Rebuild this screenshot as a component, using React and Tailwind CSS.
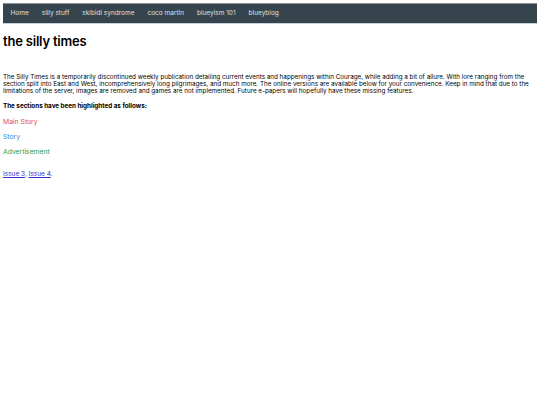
const links = ["Home", "silly stuff", "skibidi syndrome", "coco martin", "blueyism 101", "blueyblog"];

export default function App() {
    return (
        <div className="min-h-screen bg-white p-[3px] text-black" style={{ fontFamily: "Inter, 'Noto Sans', sans-serif" }}>
            <nav className="flex h-[21px] items-center border-t border-b border-t-[#8a9096] border-b-[#c9d0d4] bg-[#36444d] pl-[1px]">
                {links.map((l) => (
                    <a key={l} href="#" className="px-[6.5px] text-[6.5px] text-[#dde2e6]">
                        {l}
                    </a>
                ))}
            </nav>
            <h1 className="mt-[8px] text-[13px] font-semibold leading-[18px] tracking-[-0.2px]">the silly times</h1>
            <p className="mt-[24px] text-[6.3px] leading-[7px]">
                The Silly Times is a temporarily discontinued weekly publication detailing current events and happenings within Courage, while adding a bit of allure. With lore ranging from the section split into East and West, incomprehensively long pilgrimages, and much more. The online versions are available below for your convenience. Keep in mind that due to the limitations of the server, images are removed and games are not implemented. Future e-papers will hopefully have these missing features.
            </p>
            <p className="mt-[8px] text-[6.3px] font-bold leading-[7px]">The sections have been highlighted as follows:</p>
            <p className="mt-[8px] text-[6.8px] leading-[7px] text-[#e0533d]">Main Story</p>
            <p className="mt-[8px] text-[6.8px] leading-[7px] text-[#2f8fd8]">Story</p>
            <p className="mt-[8px] text-[6.8px] leading-[7px] text-[#22a05a]">Advertisement</p>
            <p className="mt-[16px] text-[6.5px] leading-[7px]">
                <a href="#" className="text-[#3b2fd0] underline">Issue 3</a>
                <span className="text-[#3b2fd0]">, </span>
                <a href="#" className="text-[#3b2fd0] underline">Issue 4</a>
                <span className="text-[#3b2fd0]">.</span>
            </p>
        </div>
    );
}
